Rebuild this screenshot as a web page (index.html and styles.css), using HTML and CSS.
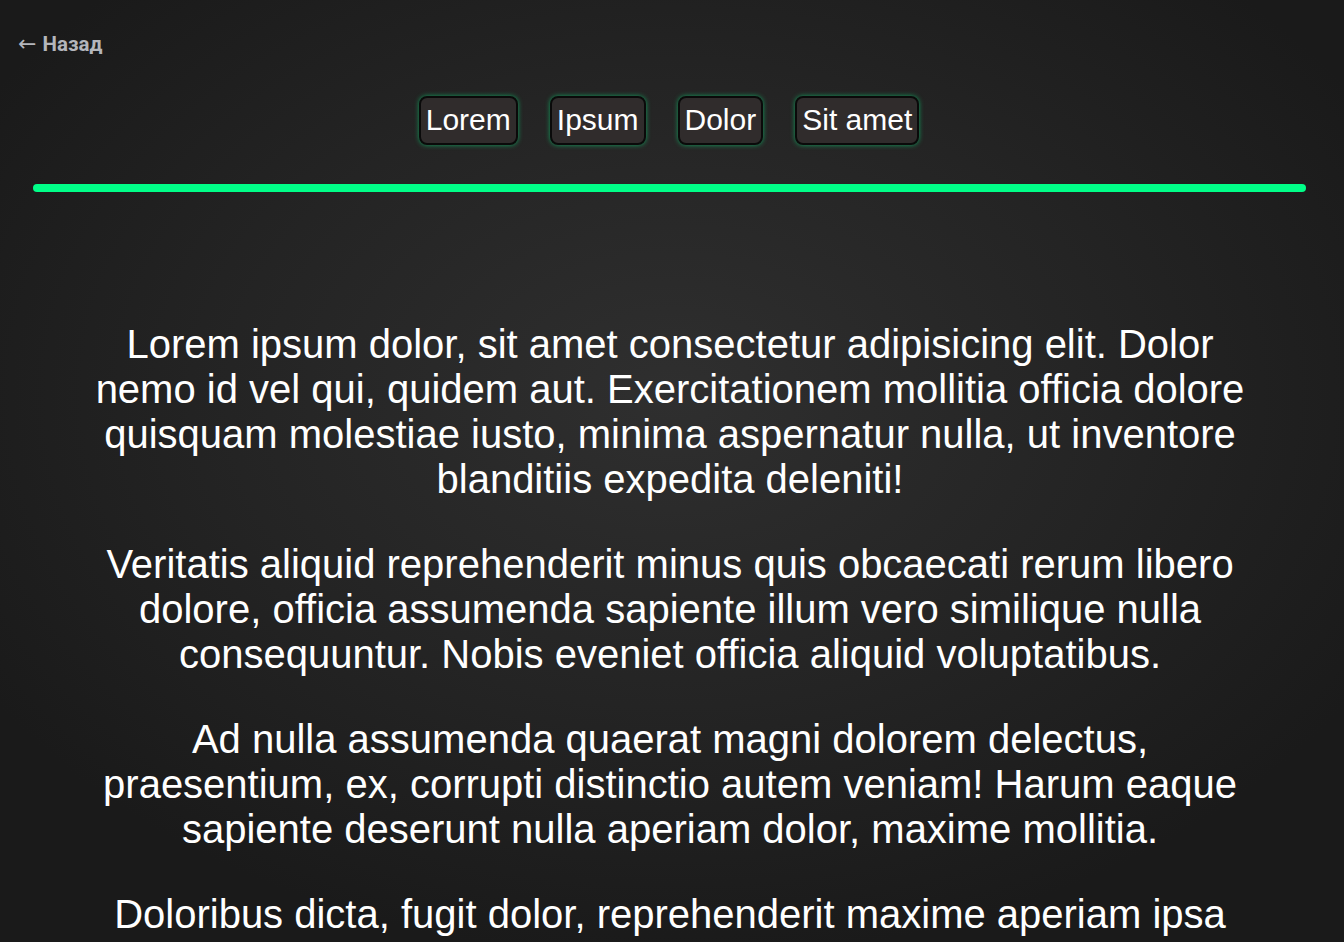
FILE: index.html
```html
<!DOCTYPE html>
<html lang="ru">
<head>
<meta charset="utf-8">
<title>Lorem</title>
<link rel="stylesheet" href="styles.css">
</head>
<body>
<a class="back" href="#"><span class="arrow">←</span> Назад</a>
<nav class="tabs">
  <button class="tab">Lorem</button>
  <button class="tab">Ipsum</button>
  <button class="tab">Dolor</button>
  <button class="tab">Sit amet</button>
</nav>
<div class="bar"></div>
<main class="content">
  <p>Lorem ipsum dolor, sit amet consectetur adipisicing elit. Dolor nemo id vel qui, quidem aut. Exercitationem mollitia officia dolore quisquam molestiae iusto, minima aspernatur nulla, ut inventore blanditiis expedita deleniti!</p>
  <p>Veritatis aliquid reprehenderit minus quis obcaecati rerum libero dolore, officia assumenda sapiente illum vero similique nulla consequuntur. Nobis eveniet officia aliquid voluptatibus.</p>
  <p>Ad nulla assumenda quaerat magni dolorem delectus, praesentium, ex, corrupti distinctio autem veniam! Harum eaque sapiente deserunt nulla aperiam dolor, maxime mollitia.</p>
  <p>Doloribus dicta, fugit dolor, reprehenderit maxime aperiam ipsa quas voluptate, tempora eligendi reiciendis inventore dolores sequi nam sint.</p>
</main>
</body>
</html>
```
FILE: styles.css
```css
html, body {
  margin: 0;
  padding: 0;
}
body {
  height: 942px;
  background: radial-gradient(ellipse 60% 60% at 50% 42%, #2f2f2f 0%, #242424 55%, #1a1a1a 100%);
  background-color: #1a1a1a;
  color: #ffffff;
  font-family: "Liberation Sans", Arial, sans-serif;
  overflow: hidden;
}
.back {
  display: inline-block;
  margin: 31px 0 0 18px;
  font-family: Roboto, "Noto Sans", sans-serif;
  font-weight: 700;
  font-size: 20.5px;
  line-height: 26px;
  color: #b4b6bc;
  text-decoration: none;
}
.arrow {
  font-family: "DejaVu Sans", sans-serif;
  font-weight: 400;
  font-size: 22px;
  margin-right: 1px;
}
.tabs {
  display: flex;
  justify-content: center;
  gap: 32px;
  margin-top: 39px;
  padding-right: 6px;
}
.tab {
  font-family: "Liberation Sans", Arial, sans-serif;
  font-size: 30px;
  line-height: 34px;
  color: #ffffff;
  background: #302c2c;
  border: 2px solid #0a0a0a;
  border-radius: 8px;
  padding: 5px 5px 6px;
  box-shadow: 0 0 5px rgba(0, 255, 136, 0.55);
  cursor: pointer;
}
.bar {
  height: 8px;
  margin: 39px 38px 0 33px;
  background: #00ff88;
  border-radius: 4px;
}
.content {
  width: 1160px;
  margin: 0 auto;
  padding: 130px 4px 0 0;
  text-align: center;
}
.content p {
  margin: 0 0 40px;
  font-size: 40px;
  line-height: 45px;
}
```
